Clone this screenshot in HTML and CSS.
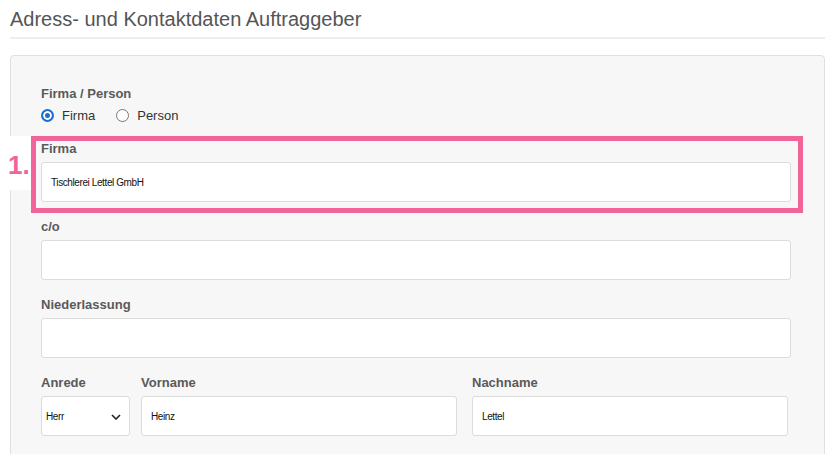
FILE: index.html
```html
<!DOCTYPE html>
<html lang="de">
<head>
<meta charset="utf-8">
<title>Adress- und Kontaktdaten Auftraggeber</title>
<link rel="stylesheet" href="styles.css">
</head>
<body>
<div class="page">
  <h2 class="section-title">Adress- und Kontaktdaten Auftraggeber</h2>
  <div class="panel">
    <div class="form-group radio-group">
      <div class="label">Firma / Person</div>
      <div class="radio-row">
        <label class="radio-option"><span class="radio checked"></span>Firma</label>
        <label class="radio-option"><span class="radio"></span>Person</label>
      </div>
    </div>

    <div class="form-group highlight">
      <span class="step-marker">1.</span>
      <div class="label">Firma</div>
      <div class="input">Tischlerei Lettel GmbH</div>
    </div>

    <div class="form-group">
      <div class="label">c/o</div>
      <div class="input"></div>
    </div>

    <div class="form-group">
      <div class="label">Niederlassung</div>
      <div class="input"></div>
    </div>

    <div class="name-row">
      <div class="col">
        <div class="label">Anrede</div>
        <div class="input select">
          <span>Herr</span>
          <svg class="chevron" width="10" height="6" viewBox="0 0 10 6"><path d="M1 1 L5 5 L9 1" fill="none" stroke="#222" stroke-width="1.6"/></svg>
        </div>
      </div>
      <div class="col">
        <div class="label">Vorname</div>
        <div class="input">Heinz</div>
      </div>
      <div class="col col-last">
        <div class="label">Nachname</div>
        <div class="input">Lettel</div>
      </div>
    </div>
  </div>
</div>
</body>
</html>
```

FILE: styles.css
```css
* { box-sizing: border-box; }

html, body {
  margin: 0;
  padding: 0;
  background: #ffffff;
  font-family: "Liberation Sans", Arial, sans-serif;
  overflow: hidden;
}

.page {
  margin-left: 10px;
  width: 815px;
}

.section-title {
  margin: 0;
  padding: 7px 0 6px 0;
  font-size: 20px;
  line-height: 24px;
  font-weight: normal;
  color: #555555;
  border-bottom: 2px solid #eeeeee;
}

.panel {
  margin-top: 16px;
  background: #f7f7f7;
  border: 1px solid #e0e0e0;
  border-radius: 4px;
  padding: 30px 33px 20px 30px;
  height: 420px;
}

.form-group {
  margin-bottom: 17px;
}

.radio-group {
  margin-bottom: 17px;
}

.label {
  font-size: 13px;
  line-height: 16px;
  font-weight: bold;
  color: #5a5a5a;
  margin-bottom: 5px;
}

.radio-row {
  display: flex;
  align-items: center;
  height: 17px;
  margin-top: 2px;
}

.radio-option {
  display: flex;
  align-items: center;
  font-size: 13px;
  color: #333333;
  margin-right: 21px;
}

.radio {
  width: 13px;
  height: 13px;
  border-radius: 50%;
  border: 1px solid #767676;
  background: #ffffff;
  margin-right: 8px;
}

.radio.checked {
  border: 2px solid #1a6fd0;
  background: #1a6fd0;
  box-shadow: inset 0 0 0 2px #ffffff;
}

.highlight {
  position: relative;
  border: 5px solid #f0649a;
  margin: -5px -12px 6px -10px;
  padding: 0 7px 6px 5px;
}

.step-marker {
  position: absolute;
  left: -36px;
  top: -5px;
  width: 31px;
  height: 54px;
  padding: 16px 0 0 8px;
  background: #ffffff;
  font-size: 26px;
  line-height: 26px;
  font-weight: bold;
  color: #f0649a;
}

.input {
  height: 40px;
  background: #ffffff;
  border: 1px solid #dcdcdc;
  border-radius: 3px;
  padding: 0 9px;
  display: flex;
  align-items: center;
  font-size: 10px;
  letter-spacing: -0.4px;
  color: #111111;
}

.select {
  padding: 0 6px 0 4px;
  justify-content: space-between;
}

.chevron {
  margin-right: 2px;
  margin-top: 1px;
}

.name-row {
  display: grid;
  grid-template-columns: 89px 316px 320px;
  column-gap: 11px;
}

.col-last {
  margin-left: 4px;
}
```
